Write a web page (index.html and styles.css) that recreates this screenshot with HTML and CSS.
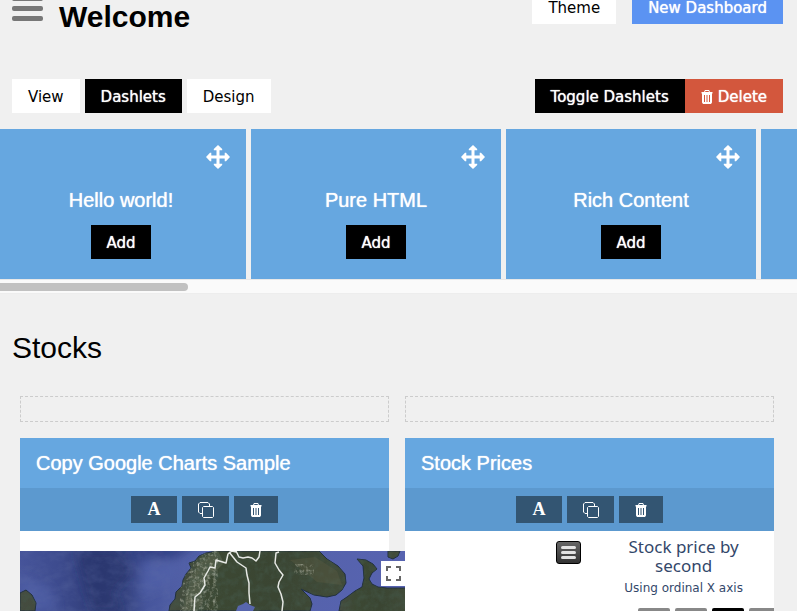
FILE: index.html
```html
<!DOCTYPE html>
<html lang="en">
<head>
<meta charset="utf-8">
<meta name="viewport" content="width=device-width, initial-scale=1">
<title>Welcome</title>
<link rel="stylesheet" href="styles.css">
</head>
<body>
<svg class="defs" aria-hidden="true">
  <symbol id="move" viewBox="0 0 24 24"><path d="M12 0l4.200 4v1.300H13.500v5.200h5.200V7.800H20l4 4.200-4 4.200h-1.300V13.500h-5.200v5.200h2.700V20L12 24l-4.200-4v-1.300h2.700v-5.200H5.300v2.700H4L0 12l4-4.200h1.300v2.700h5.200V5.300H7.800V4z"/></symbol>
  <symbol id="trash" viewBox="0 0 12 14"><path fill-rule="evenodd" d="M4 0h4l1 2h2.500v1.500H11V12.500L10 14H2l-1-1.500V3.500H.5V2H3zM4.500 1L4 2h4l-.5-1zM3 5v7h1V5zm2.500 0v7h1V5zM8 5v7h1V5z"/></symbol>
  <symbol id="copy" viewBox="0 0 16 16"><path fill="none" stroke="currentColor" d="M4 11.500H2l-1.500-1.500V2L2 .5h8L11.500 2v2M5.500 4.500h9l1 1v9l-1 1h-9l-1-1v-9z"/></symbol>
</svg>

<header class="bar header">
  <div class="brand">
    <button class="menu" aria-label="Menu"><span></span><span></span><span></span></button>
    <h1>Welcome</h1>
  </div>
  <div class="group wide">
    <button class="btn">Theme</button>
    <button class="btn primary">New Dashboard</button>
  </div>
</header>

<nav class="bar tabs">
  <div class="group">
    <button class="btn">View</button>
    <button class="btn dark">Dashlets</button>
    <button class="btn">Design</button>
  </div>
  <div class="group joined">
    <button class="btn dark">Toggle Dashlets</button>
    <button class="btn danger"><svg class="trash"><use href="#trash"/></svg>Delete</button>
  </div>
</nav>

<section class="shelf">
  <div class="shelf-list">
    <article class="tile"><svg class="move"><use href="#move"/></svg><h3>Hello world!</h3><button class="btn dark add">Add</button></article>
    <article class="tile"><svg class="move"><use href="#move"/></svg><h3>Pure HTML</h3><button class="btn dark add">Add</button></article>
    <article class="tile"><svg class="move"><use href="#move"/></svg><h3>Rich Content</h3><button class="btn dark add">Add</button></article>
    <article class="tile"></article>
  </div>
  <div class="track"><div class="thumb"></div></div>
</section>

<main>
  <h2>Stocks</h2>
  <div class="columns">
    <section class="column">
      <div class="drop"></div>
      <article class="card">
        <h3>Copy Google Charts Sample</h3>
        <div class="tools">
          <button class="tool letter" aria-label="Rename">A</button>
          <button class="tool" aria-label="Copy"><svg class="copy"><use href="#copy"/></svg></button>
          <button class="tool small" aria-label="Delete"><svg class="trash"><use href="#trash"/></svg></button>
        </div>
        <div class="map">
          <svg class="map-image" viewBox="20 551 385 60" preserveAspectRatio="xMinYMin slice">
            <defs>
              <linearGradient id="sea" x1="0" x2="1" y1="0" y2="0">
                <stop offset="0" stop-color="#46549a"/><stop offset=".1" stop-color="#3d4b8e"/>
                <stop offset=".2" stop-color="#303d78"/><stop offset=".27" stop-color="#34427e"/>
                <stop offset=".33" stop-color="#46559c"/><stop offset=".44" stop-color="#5361a8"/>
                <stop offset="1" stop-color="#5763b0"/>
              </linearGradient>
              <linearGradient id="land" x1="0" x2="1" y1="0" y2="0">
                <stop offset="0" stop-color="#454c40"/><stop offset=".25" stop-color="#3c4833"/>
                <stop offset=".6" stop-color="#3a4532"/><stop offset="1" stop-color="#414b39"/>
              </linearGradient>
              <filter id="soft" x="-20%" y="-20%" width="140%" height="140%"><feGaussianBlur stdDeviation="5"/></filter>
              <filter id="rough" x="0" y="0" width="100%" height="100%">
                <feTurbulence type="fractalNoise" baseFrequency=".14" numOctaves="4" seed="8"/>
                <feColorMatrix values="0 0 0 0 .06  0 0 0 0 .1  0 0 0 0 .07  1.600 0 0 0 -.6"/>
              </filter>
              <filter id="light" x="0" y="0" width="100%" height="100%">
                <feTurbulence type="fractalNoise" baseFrequency=".3" numOctaves="3" seed="3"/>
                <feColorMatrix values="0 0 0 0 .7  0 0 0 0 .7  0 0 0 0 .6  2 0 0 0 -.9"/>
              </filter>
              <filter id="waves" x="0" y="0" width="100%" height="100%">
                <feTurbulence type="fractalNoise" baseFrequency=".08 .12" numOctaves="4" seed="5"/>
                <feColorMatrix values="0 0 0 0 .12  0 0 0 0 .16  0 0 0 0 .38  1.400 0 0 0 -.5"/>
              </filter>
              <path id="scandinavia" d="M216 551l-10 2-7 3-4 5-6 2 2 5-5 6-3 6-1 6-6 6-1 7-5 6-1 6h141l2-7-2-6-9-9 13 6 13 2 9-2 6-5 4-7-1-9-7-8-11-7-8-8z"/>
              <path id="east" d="M339 611l2-10 6-4 8-6 7-4 2-9-1-12-6-7 9 1 7 4 4 5-5 4-3 6 3 5 6 3 9 1h20v30z"/>
              <path id="islands" d="M20 593l6-3 6 5 4 8-1 8H20zM388 551h12l-2 5-5 3-5-2z"/>
              <clipPath id="ground"><use href="#scandinavia"/><use href="#east"/><use href="#islands"/></clipPath>
            </defs>
            <rect x="20" y="551" width="385" height="60" fill="url(#sea)"/>
            <g filter="url(#soft)">
              <path fill="#27336b" opacity=".6" d="M75 551h40l18 20-20 22 10 18H92z"/>
              <path fill="#2b387b" opacity=".7" d="M130 545h70l-25 13-42 2z"/>
              <path fill="#5363aa" opacity=".6" d="M20 575l30 12 8 24H20zM145 561l35 4-10 20-30 10z"/>
            </g>
            <rect x="20" y="551" width="150" height="60" filter="url(#waves)" opacity=".35"/>
            <g fill="url(#land)" stroke="#202f3e" stroke-width="1">
              <use href="#scandinavia"/><use href="#east"/><use href="#islands"/>
            </g>
            <g clip-path="url(#ground)">
              <path d="M218 551l-18 9-10 20-8 31h16l8-30 18-18z" fill="#68705c" opacity=".45"/>
              <rect x="20" y="551" width="385" height="60" filter="url(#rough)" opacity=".8"/>
              <path d="M290 560l25-3 22 14 5 14-25-3z" fill="#646047" opacity=".3"/>
              <rect x="180" y="551" width="38" height="60" filter="url(#light)" opacity=".6"/>
              <rect x="294" y="564" width="20" height="11" filter="url(#light)" opacity=".6"/>
            </g>
            <path fill="#5866ad" d="M236 611l2-5 5-2 3-2 4 3 5 2-2 4z"/>
            <path fill="none" stroke="#e6e8e4" stroke-width="1.500" stroke-linejoin="round" d="M194 611l1-14 5-4 5-8-1-7 4-7 2-4 5 1 1-8 10 3 2-9 4-3 4 1M229 552l8 10 9 6 1 7 2 8 0 10 1 11M236 551l3 6 4 1 5-1 4 1 4 3 3-4 1-6M279 552l-3 1-1 10 4 7 4 5-4 7-1 5 3 7 2 8-1 9"/>
          </svg>
          <button class="full" aria-label="Toggle fullscreen"><svg viewBox="0 0 15 15"><path fill="none" stroke="#666" stroke-width="2" d="M1 5V1h4M10 1h4v4M14 10v4h-4M5 14H1v-4"/></svg></button>
        </div>
      </article>
    </section>
    <section class="column">
      <div class="drop"></div>
      <article class="card">
        <h3>Stock Prices</h3>
        <div class="tools">
          <button class="tool letter" aria-label="Rename">A</button>
          <button class="tool" aria-label="Copy"><svg class="copy"><use href="#copy"/></svg></button>
          <button class="tool small" aria-label="Delete"><svg class="trash"><use href="#trash"/></svg></button>
        </div>
        <div class="chart">
          <button class="export" aria-label="Chart menu"><span></span><span></span><span></span></button>
          <div class="chart-main">
            <h4>Stock price by second</h4>
            <p>Using ordinal X axis</p>
            <div class="ranges"><span></span><span></span><span class="on"></span><span></span></div>
          </div>
        </div>
      </article>
    </section>
  </div>
</main>
</body>
</html>
```
FILE: styles.css
```css
* {
  box-sizing: border-box;
}

body {
  display: flow-root;
  height: 100vh;
  margin: 0;
  overflow: hidden;
  background: #f0f0f0;
  color: #000;
  font-family: "Liberation Sans", Arial, sans-serif;
}

h1, h2, h3, h4, p {
  margin: 0;
  font-weight: 400;
}

button {
  border: 0;
  padding: 0;
  color: inherit;
}

svg {
  display: block;
  fill: currentColor;
}

.defs {
  position: absolute;
  width: 0;
  height: 0;
}

.bar {
  display: flex;
  justify-content: space-between;
  padding: 0 14px 0 12px;
}

/* The header is partly scrolled out of view. */
.header {
  margin-top: -10px;
}

.tabs {
  margin: 55px 0 16px;
}

.brand {
  display: flex;
  align-items: flex-start;
  gap: 16px;
}

.menu {
  display: flex;
  flex-direction: column;
  gap: 5px;
  width: 31px;
  padding-top: 6px;
  background: none;
}

.menu span {
  height: 5px;
  border-radius: 2px;
  background: #777;
}

h1 {
  padding-top: 10px;
  height: 34px;
  font-size: 30px;
  font-weight: 700;
  line-height: 34px;
}

.group {
  display: flex;
  align-items: flex-start;
  gap: 5px;
}

.wide {
  gap: 16px;
}

.joined {
  gap: 0;
}

.btn {
  display: flex;
  align-items: center;
  height: 34px;
  padding: 2px 16px 0;
  background: #fff;
  font: 15px/18px "DejaVu Sans", Verdana, sans-serif;
  white-space: nowrap;
}

.primary {
  background: #5b93f2;
  color: #fff;
}

.dark {
  background: #000;
  color: #fff;
}

.danger {
  gap: 5px;
  background: #d3573d;
  color: #fff;
}

.primary, .dark, .danger, .tile h3, .card h3 {
  text-shadow: 0 0 1px #fff;
}

.trash {
  width: 12px;
  height: 14px;
}

.shelf {
  overflow: hidden;
}

.shelf-list {
  display: flex;
  gap: 5px;
  margin-left: -4px;
}

.tile {
  display: flex;
  flex: none;
  flex-direction: column;
  align-items: center;
  width: 250px;
  height: 150px;
  padding: 16px;
  background: #66a7e0;
  color: #fff;
}

.move {
  align-self: flex-end;
  width: 24px;
  height: 24px;
}

.tile h3 {
  margin: 19px 0 13px;
  font-size: 20px;
  line-height: 24px;
}

.add {
  padding: 2px 15px 0;
}

.track {
  height: 15px;
  padding: 3px 0;
  border-top: 1px solid #e8e8e8;
  border-bottom: 1px solid #ededed;
  background: #fafafa;
}

.thumb {
  width: 24%;
  height: 8px;
  margin-left: -3px;
  border-radius: 4px;
  background: #c1c1c1;
}

h2 {
  padding: 35px 12px 30px;
  font-size: 30px;
  line-height: 37px;
}

.columns {
  display: grid;
  grid-template-columns: 1fr 1fr;
  gap: 16px;
  padding: 0 23px 0 20px;
}

.column {
  min-width: 0;
}

.drop {
  height: 26px;
  margin-bottom: 16px;
  border: 1px dashed #ccc;
}

.card {
  background: #fff;
}

.card h3 {
  padding: 13px 16px;
  background: #66a7e0;
  color: #fff;
  font-size: 20px;
  line-height: 24px;
}

.tools {
  display: flex;
  justify-content: center;
  gap: 5px;
  padding: 8px 0;
  background: #5c99cf;
}

.tool {
  display: flex;
  align-items: center;
  justify-content: center;
  width: 47px;
  height: 27px;
  background: #335572;
  color: #fff;
}

.small {
  width: 44px;
}

.letter {
  width: 46px;
  font: 700 18px/27px "Liberation Serif", serif;
}

.copy {
  width: 16px;
  height: 16px;
}

.map {
  position: relative;
  width: calc(100% + 16px);
  margin-top: 20px;
}

.map-image {
  width: 100%;
  height: 60px;
}

.full {
  position: absolute;
  top: 10px;
  right: 0;
  display: flex;
  align-items: center;
  justify-content: center;
  width: 24px;
  height: 25px;
  background: #fff;
}

.full svg {
  width: 15px;
  height: 15px;
}

.chart {
  display: flex;
  justify-content: flex-end;
  align-items: flex-start;
  gap: 12px;
  padding-top: 6px;
  color: #33476a;
}

.export {
  display: flex;
  flex-direction: column;
  gap: 2px;
  width: 25px;
  height: 23px;
  margin-top: 4px;
  padding: 4px;
  border: 1px solid #000;
  border-radius: 3px;
  background: linear-gradient(#666, #333);
}

.export span {
  height: 3px;
  border-radius: 2px;
  background: #e3e3e3;
}

.chart-main {
  width: 49%;
  text-align: center;
}

.chart h4 {
  padding: 0 28px;
  font: 17px/19px "Noto Sans", sans-serif;
}

.chart p {
  margin: 5px 0 12px;
  font: 12px/16px "DejaVu Sans", sans-serif;
}

.ranges {
  display: flex;
  gap: 5px;
  padding-left: 45px;
  overflow: hidden;
}

.ranges span {
  flex: none;
  width: 32px;
  height: 20px;
  border-radius: 2px;
  background: #888;
}

.ranges .on {
  background: #000;
}
```
